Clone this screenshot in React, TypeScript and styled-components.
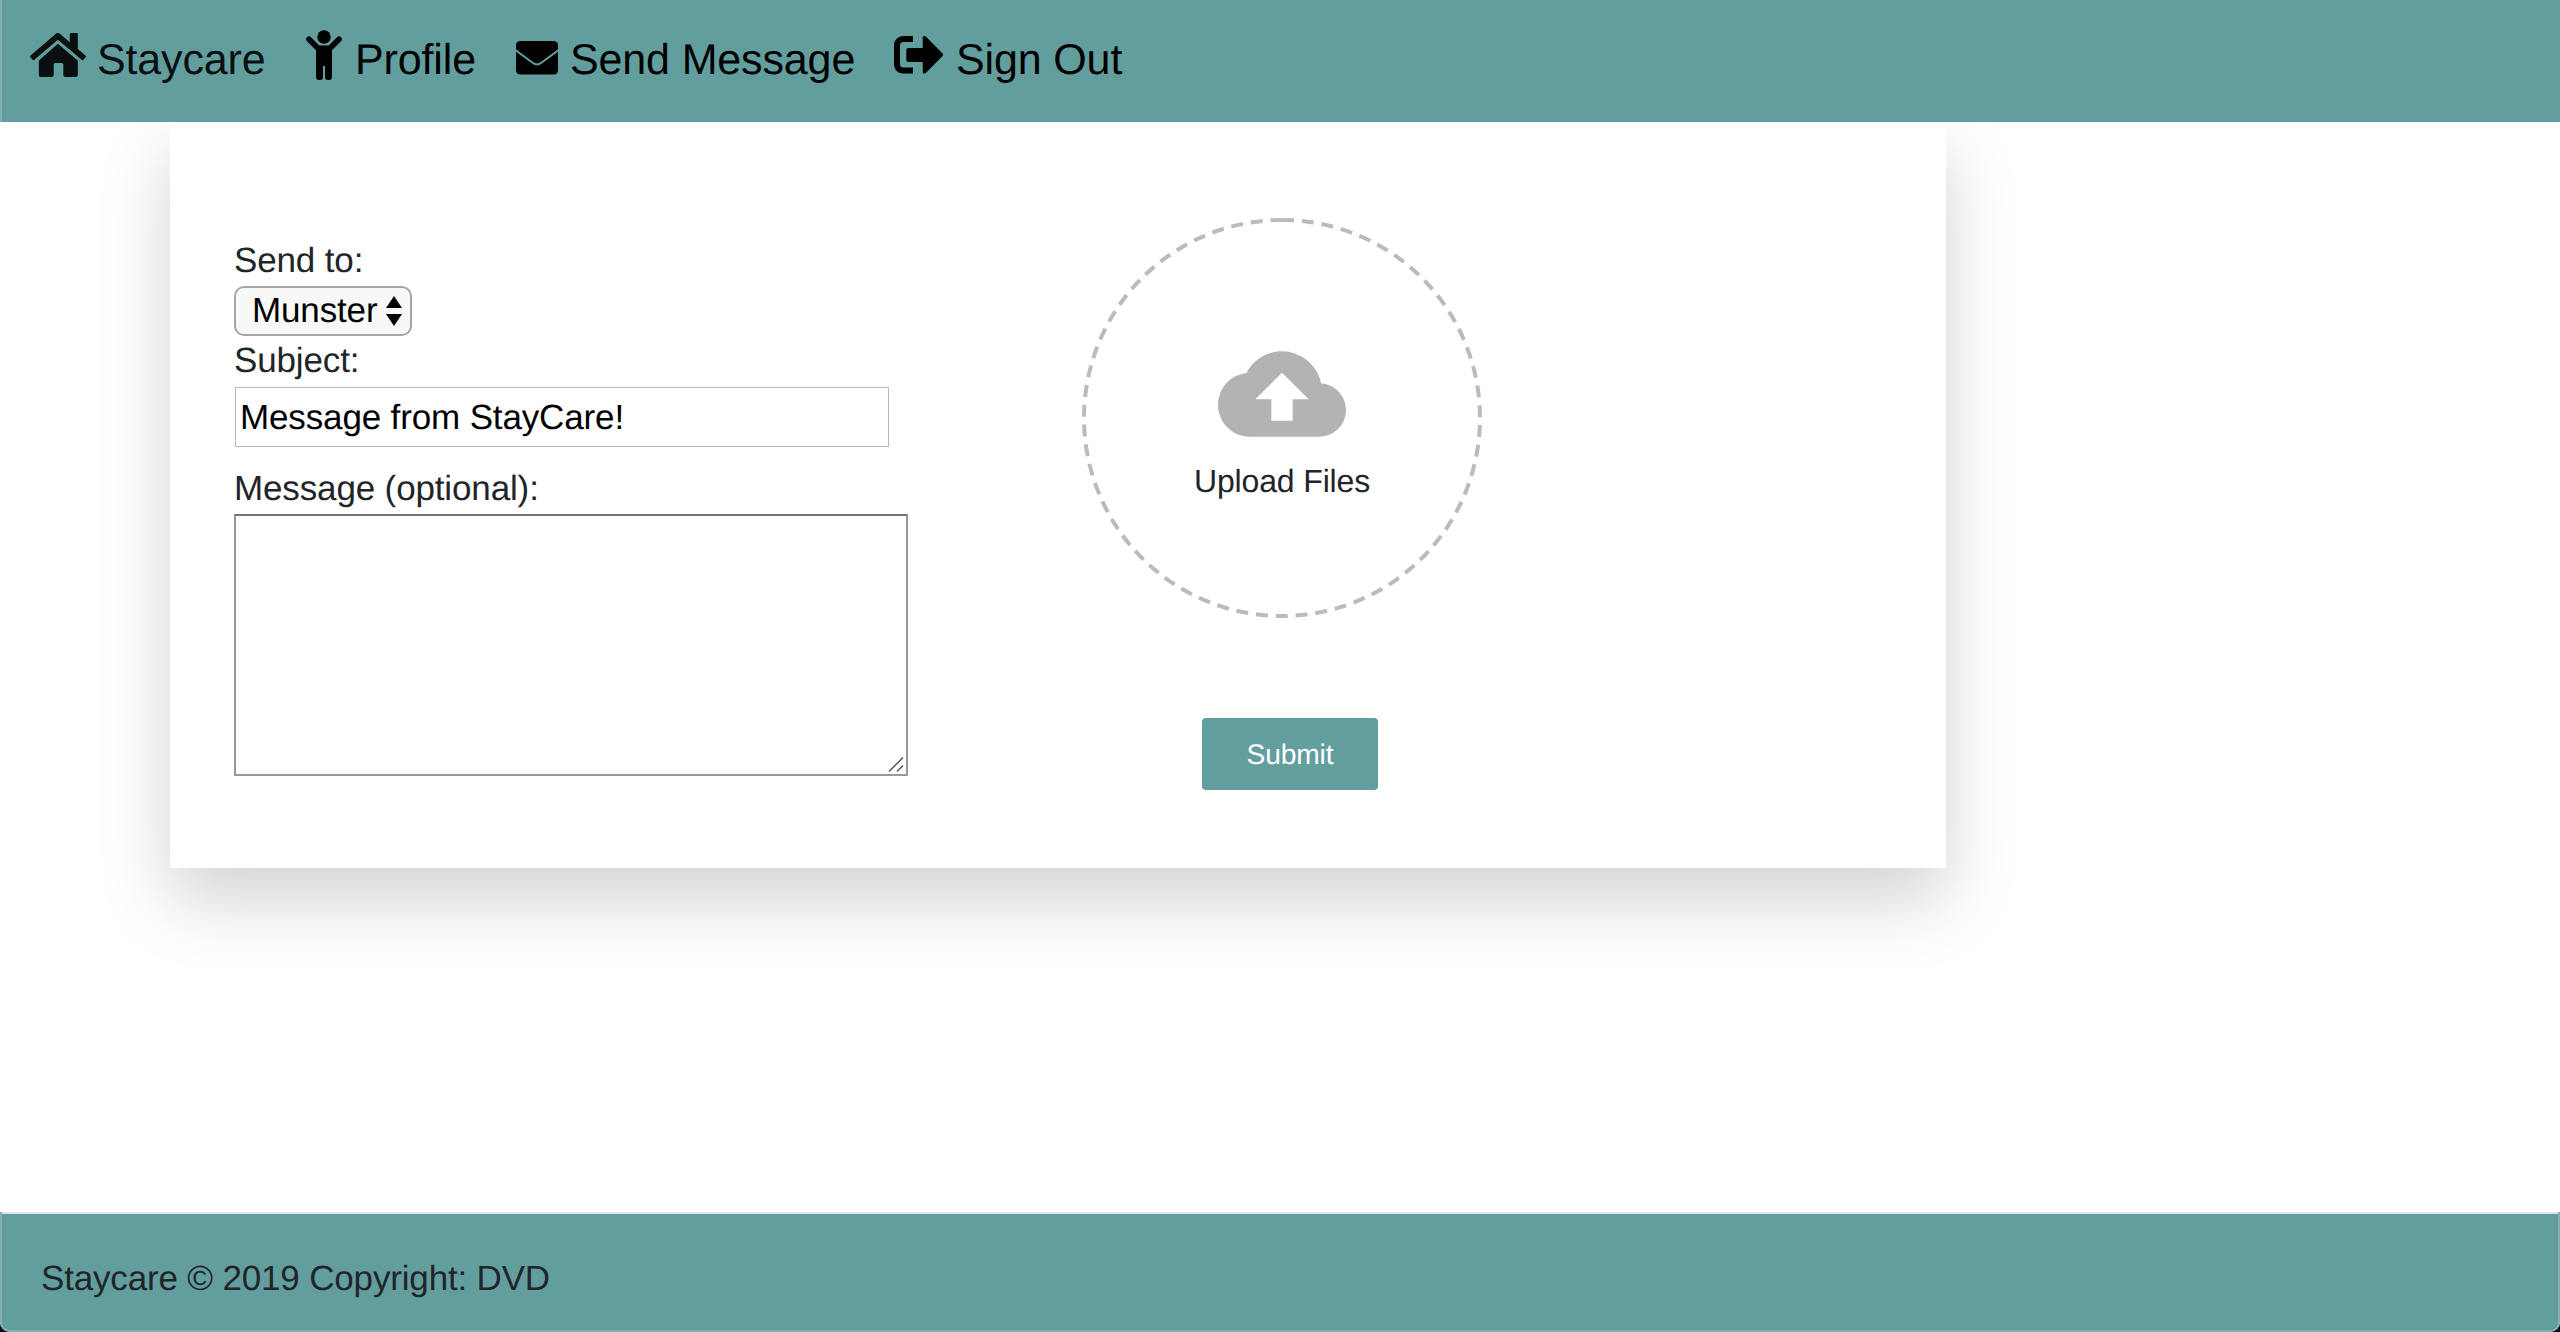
import React from 'react';
import styled, { createGlobalStyle } from 'styled-components';
import { MdCloudUpload } from 'react-icons/md';

const GlobalStyle = createGlobalStyle`
  * { box-sizing: border-box; }
  body {
    margin: 0;
    background: #0c0c16;
    font-family: "Liberation Sans", Arial, sans-serif;
    font-size: 35px;
    letter-spacing: -0.14px;
    color: #212529;
    text-rendering: geometricPrecision;
  }
`;

const Page = styled.div`
  display: flex;
  flex-direction: column;
  height: 1332px;
  overflow: hidden;
  background: #fff;
  border-radius: 0 0 10px 10px;
`;

const Nav = styled.nav`
  display: flex;
  align-items: flex-start;
  height: 122px;
  flex: none;
  padding-left: 28px;
  background: #639e9f;
  border-left: 2px solid #82b1b2;
  position: relative;
  z-index: 1;
`;

const NavLink = styled.a<{ $gap: number; $after: number; $color?: string }>`
  display: flex;
  gap: ${(p) => p.$gap}px;
  margin-right: ${(p) => p.$after}px;
  color: ${(p) => p.$color ?? '#000'};
  font-size: 43px;
  line-height: 48px;
  text-decoration: none;
  white-space: nowrap;
`;

const NavIcon = styled.span<{ $top: number }>`
  display: flex;
  margin-top: ${(p) => p.$top}px;
  svg { flex: none; }
`;

const NavText = styled.span<{ $w: number }>`
  width: ${(p) => p.$w}px;
  margin-top: 36px;
`;

const Main = styled.main`
  flex: 1;
  padding-left: 170px;
`;

const Card = styled.form`
  display: flex;
  width: 1776px;
  height: 746px;
  padding-left: 64px;
  background: #fff;
  box-shadow: 0 32px 68px rgba(0, 0, 0, 0.175);
`;

const Fields = styled.div`
  display: flex;
  flex-direction: column;
  align-items: flex-start;
  width: 848px;
  padding-top: 116px;
`;

const Label = styled.label<{ $top?: number; $h: number }>`
  margin-top: ${(p) => p.$top ?? 0}px;
  height: ${(p) => p.$h}px;
  line-height: 46px;
`;

const Select = styled.div`
  display: flex;
  align-items: center;
  justify-content: space-between;
  width: 178px;
  height: 50px;
  padding: 0 8px 0 16px;
  border: 2px solid #a5a5a5;
  border-radius: 10px;
  background: #f8f8f8;
  color: #000;
  line-height: 44px;
`;

const TextInput = styled.input`
  width: 654px;
  height: 60px;
  margin-left: 1px;
  padding: 1px 4px 0;
  border: 1px solid #bbb;
  outline: none;
  background: #fff;
  color: #000;
  font: 35px "Liberation Sans", Arial, sans-serif;
  letter-spacing: -0.14px;
  text-rendering: geometricPrecision;
`;

const Area = styled.div`
  display: flex;
  align-items: flex-end;
  justify-content: flex-end;
  width: 674px;
  height: 262px;
  padding: 0 2px 2px 0;
  border: 2px solid #999;
  border-top-color: #737373;
  background: #fff;
`;

const Side = styled.div`
  display: flex;
  flex-direction: column;
  align-items: flex-start;
  padding-top: 96px;
`;

const Drop = styled.label`
  position: relative;
  display: flex;
  flex-direction: column;
  align-items: center;
  width: 400px;
  height: 400px;
  padding-top: 112px;
  font-size: 32px;
  line-height: 40px;
`;

const Ring = styled.svg`
  position: absolute;
  inset: 0;
`;

const DropText = styled.span`
  margin-top: 3px;
`;

const Submit = styled.button`
  width: 176px;
  height: 72px;
  margin: 100px 0 0 120px;
  padding: 1px 0 0;
  border: 0;
  border-radius: 4px;
  background: #639e9f;
  color: #fff;
  font: 28.2px "Liberation Sans", Arial, sans-serif;
  letter-spacing: -0.14px;
  text-rendering: geometricPrecision;
`;

const Footer = styled.footer`
  flex: none;
  height: 120px;
  padding: 45px 0 0 39px;
  border: solid #82b1b2;
  border-width: 0 2px 2px;
  border-radius: 0 0 10px 10px;
  background: #639e9f;
  box-shadow: inset 0 2px 0 #e0e2e2;
  line-height: 44px;
  letter-spacing: -0.17px;
`;

const HomeIcon = () => (
  <svg width="56" height="44" viewBox="0 0 56 44" fill="currentColor">
    <path d="M25.900 .8a3 3 0 0 1 4 0l9.900 8.400V1a1 1 0 0 1 1-1h6a1 1 0 0 1 1 1v15l7.900 6.700a.9.900 0 0 1 .1 1.300l-2.600 2.900a.9.900 0 0 1-1.300.1L27.900 6.800 4.100 27a.9.900 0 0 1-1.300-.1L.2 24a.9.900 0 0 1 .1-1.300z" />
    <path d="M27.900 10.800l19.900 16.800V42a2 2 0 0 1-2 2H35.300a2 2 0 0 1-2-2V31.500a1.500 1.500 0 0 0-1.500-1.500h-6.600a1.500 1.500 0 0 0-1.500 1.500V42a2 2 0 0 1-2 2H10.800a2 2 0 0 1-2-2V27.600z" />
  </svg>
);

const PersonIcon = () => (
  <svg width="36" height="50" viewBox="0 0 36 50" fill="currentColor">
    <circle cx="18" cy="7" r="6.700" />
    <path d="M3 9.200l9.800 9.800M33 9.200L23.200 19" fill="none" stroke="currentColor" strokeWidth="5.600" strokeLinecap="round" />
    <path d="M13.200 15.500h9.600L26 19v28a3 3 0 0 1-3 3h-1a3 3 0 0 1-3-3V36h-2v11a3 3 0 0 1-3 3h-1a3 3 0 0 1-3-3V19z" />
  </svg>
);

const EnvelopeIcon = () => (
  <svg width="42" height="34" viewBox="0 0 42 34">
    <rect width="42" height="33.500" rx="4.200" fill="currentColor" />
    <path d="M-1 8.800l17.600 13q4.400 3.400 8.800 0L43 8.800" fill="none" stroke="#639e9f" strokeWidth="1.900" />
  </svg>
);

const SignOutIcon = () => (
  <svg width="50" height="38" viewBox="0 0 50 38" fill="currentColor">
    <path d="M19 0H9a9 9 0 0 0-9 9v19.600a9 9 0 0 0 9 9h10v-6.100h-9.500A3.500 3.500 0 0 1 6 28V9.600a3.500 3.500 0 0 1 3.500-3.500H19z" />
    <path d="M14.300 12H28.700V1.500q0-1.500 1.700-1.500 1 0 1.600.8L48.600 17.500q1.300 1.300 0 2.600L32 36.800q-.6.8-1.600.8-1.700 0-1.700-1.500V26H14.300a2 2 0 0 1-2-2V14a2 2 0 0 1 2-2z" />
  </svg>
);

export default function App() {
  return (
    <>
      <GlobalStyle />
      <Page>
        <Nav>
          <NavLink $gap={11} $after={41} $color="#0a1010">
            <NavIcon $top={33}><HomeIcon /></NavIcon>
            <NavText $w={168}>Staycare</NavText>
          </NavLink>
          <NavLink $gap={13} $after={39}>
            <NavIcon $top={30}><PersonIcon /></NavIcon>
            <NavText $w={122}>Profile</NavText>
          </NavLink>
          <NavLink $gap={12} $after={38}>
            <NavIcon $top={41}><EnvelopeIcon /></NavIcon>
            <NavText $w={286}>Send Message</NavText>
          </NavLink>
          <NavLink $gap={12} $after={0}>
            <NavIcon $top={36}><SignOutIcon /></NavIcon>
            <NavText $w={170}>Sign Out</NavText>
          </NavLink>
        </Nav>
        <Main>
          <Card>
            <Fields>
              <Label $h={48}>Send to:</Label>
              <Select>
                Munster
                <svg width="16" height="30" viewBox="0 0 16 30">
                  <path d="M8 0l8 12H0zM8 30L0 18h16z" fill="#000" />
                </svg>
              </Select>
              <Label $top={2} $h={49}>Subject:</Label>
              <TextInput defaultValue="Message from StayCare!" />
              <Label $top={19} $h={48}>Message (optional):</Label>
              <Area>
                <svg width="16" height="15" viewBox="0 0 16 15" stroke="#555" strokeWidth="1.500">
                  <path d="M1 14.500L15 .5M9 14.500l6-6" />
                </svg>
              </Area>
            </Fields>
            <Side>
              <Drop>
                <Ring width="400" height="400" viewBox="0 0 400 400">
                  <circle cx="200" cy="200" r="198" fill="none" stroke="#bbb" strokeWidth="4" strokeDasharray="12 7.872" transform="rotate(-90 200 200)" />
                </Ring>
                <MdCloudUpload size={128} color="#b3b3b3" />
                <DropText>Upload Files</DropText>
              </Drop>
              <Submit type="button">Submit</Submit>
            </Side>
          </Card>
        </Main>
        <Footer>Staycare © 2019 Copyright: DVD</Footer>
      </Page>
    </>
  );
}
